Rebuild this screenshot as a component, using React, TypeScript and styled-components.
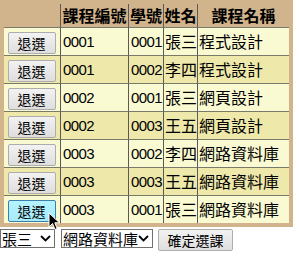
import React from "react";
import styled, { createGlobalStyle } from "styled-components";

const Global = createGlobalStyle`
  html, body { margin: 0; padding: 0; background: #fff; }
  body { font-family: "Liberation Sans", "Noto Sans CJK TC", sans-serif; }
`;

const Page = styled.div`
  position: relative;
  width: 299px;
  height: 258px;
  overflow: hidden;
`;

const Table = styled.table`
  border-collapse: separate;
  border-spacing: 0;
  border: 4px solid #d2b48c;
  table-layout: fixed;
  width: 293px;
  font-size: 16px;
`;

const Th = styled.th`
  background: #d2b48c;
  height: 23px;
  padding: 0;
  font-family: "Noto Sans CJK TC", sans-serif;
  font-weight: 700;
  font-size: 16px;
  line-height: 23px;
  color: #000;
  white-space: nowrap;
  border-left: 1px solid #5a5a5a;
  &:first-child { border-left: none; }
`;

const Tr = styled.tr<{ $alt: boolean }>`
  background: ${(p) => (p.$alt ? "#eee8aa" : "#fafad2")};
`;

const Td = styled.td<{ $first?: boolean }>`
  height: 27px;
  padding: 0 0 0 ${(p) => (p.$first ? "0" : "2px")};
  border-top: 1px solid #7a7a6a;
  border-left: ${(p) => (p.$first ? "none" : "1px solid #5a5a5a")};
  font-family: "Liberation Sans", "Noto Sans CJK TC", sans-serif;
  font-size: 15px;
  letter-spacing: -0.6px;
  line-height: 27px;
  color: #000;
  white-space: nowrap;
  text-align: ${(p) => (p.$first ? "center" : "left")};
`;

const NameTd = styled(Td)`
  padding-left: 1px;
  letter-spacing: 0;
  font-family: "Noto Sans CJK TC", sans-serif;
  font-size: 16px;
`;

const Btn = styled.button<{ $hover?: boolean }>`
  width: 48px;
  height: 22px;
  padding: 0;
  margin: 0 0 0 -1px;
  vertical-align: middle;
  font-family: "Noto Sans CJK TC", sans-serif;
  font-size: 14px;
  line-height: 20px;
  color: #000;
  border: 1px solid ${(p) => (p.$hover ? "#3c7fb1" : "#adadad")};
  border-radius: 2px;
  background: ${(p) =>
    p.$hover
      ? "linear-gradient(#b6f3ff, #a6ebfb)"
      : "linear-gradient(#f2f2f2, #dedede)"};
`;

const Controls = styled.div`
  display: flex;
  align-items: flex-start;
  gap: 6px;
  margin-top: 2px;
`;

const Select = styled.div<{ $w: number }>`
  width: ${(p) => p.$w}px;
  height: 19px;
  box-sizing: border-box;
  border: 1px solid #707070;
  background: #fff;
  display: flex;
  align-items: center;
  justify-content: space-between;
  padding: 0 3px 0 1px;
  font-family: "Noto Sans CJK TC", sans-serif;
  font-size: 15px;
  line-height: 17px;
  white-space: nowrap;
  color: #000;
`;

const SubmitBtn = styled.button`
  width: 75px;
  height: 22px;
  margin-left: -1px;
  padding: 0;
  font-family: "Noto Sans CJK TC", sans-serif;
  font-size: 14px;
  line-height: 20px;
  color: #000;
  border: 1px solid #adadad;
  border-radius: 2px;
  background: linear-gradient(#f2f2f2, #dedede);
`;

const Cursor = styled.svg`
  position: absolute;
  left: 48px;
  top: 212px;
`;

const Chevron = () => (
  <svg width="11" height="7" viewBox="0 0 11 7">
    <path d="M1 1 L5.5 5.5 L10 1" fill="none" stroke="#000" strokeWidth="1.8" />
  </svg>
);

const rows = [
  ["0001", "0001", "張三", "程式設計"],
  ["0001", "0002", "李四", "程式設計"],
  ["0002", "0001", "張三", "網頁設計"],
  ["0002", "0003", "王五", "網頁設計"],
  ["0003", "0002", "李四", "網路資料庫"],
  ["0003", "0003", "王五", "網路資料庫"],
  ["0003", "0001", "張三", "網路資料庫"],
];

export default function App() {
  return (
    <Page>
      <Global />
      <Table>
        <colgroup>
          <col style={{ width: 56 }} />
          <col style={{ width: 68 }} />
          <col style={{ width: 35 }} />
          <col style={{ width: 34 }} />
          <col style={{ width: 92 }} />
        </colgroup>
        <thead>
          <tr>
            <Th></Th>
            <Th>課程編號</Th>
            <Th>學號</Th>
            <Th>姓名</Th>
            <Th>課程名稱</Th>
          </tr>
        </thead>
        <tbody>
          {rows.map((r, i) => (
            <Tr key={i} $alt={i % 2 === 1}>
              <Td $first>
                <Btn $hover={i === rows.length - 1}>退選</Btn>
              </Td>
              <Td>{r[0]}</Td>
              <Td>{r[1]}</Td>
              <NameTd>{r[2]}</NameTd>
              <NameTd>{r[3]}</NameTd>
            </Tr>
          ))}
        </tbody>
      </Table>
      <Controls>
        <Select $w={55}>
          <span>張三</span>
          <Chevron />
        </Select>
        <Select $w={92}>
          <span>網路資料庫</span>
          <Chevron />
        </Select>
        <SubmitBtn>確定選課</SubmitBtn>
      </Controls>
      <Cursor width="13" height="20" viewBox="0 0 13 20">
        <path
          d="M1 1 L1 15 L4.5 11.5 L7 17.5 L9.2 16.6 L6.8 10.8 L11.5 10.8 Z"
          fill="#000"
          stroke="#fff"
          strokeWidth="1"
        />
      </Cursor>
    </Page>
  );
}
